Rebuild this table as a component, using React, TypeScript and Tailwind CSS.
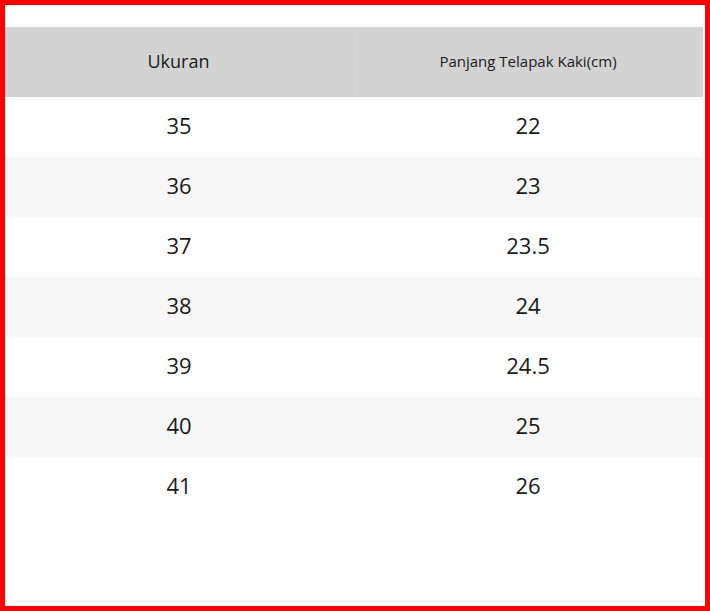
import React from "react";

const rows: [string, string][] = [
  ["35", "22"],
  ["36", "23"],
  ["37", "23.5"],
  ["38", "24"],
  ["39", "24.5"],
  ["40", "25"],
  ["41", "26"],
];

export default function App() {
  return (
    <div
      className="w-[710px] h-[611px] border-[5px] border-[#ff0000] bg-white text-[#1a1a1a]"
      style={{ fontFamily: '"Open Sans", "Noto Sans", sans-serif' }}
    >
      <div className="pt-[22px] pr-[2px]">
        <div className="grid grid-cols-[348px_350px] h-[70px] bg-[#d3d3d3]">
          <div className="flex items-center justify-center pb-[2px] text-[18px] border-r border-[#cfcfcf]">
            Ukuran
          </div>
          <div className="flex items-center justify-center pb-[2px] text-[15px]">
            Panjang Telapak Kaki(cm)
          </div>
        </div>
        {rows.map(([size, cm], i) => (
          <div
            key={size}
            className={
              "grid grid-cols-[348px_350px] h-[60px] pb-[4px] text-[22px] " +
              (i % 2 === 1 ? "bg-[#f7f7f7]" : "bg-white")
            }
          >
            <div className="flex items-center justify-center">{size}</div>
            <div className="flex items-center justify-center">{cm}</div>
          </div>
        ))}
      </div>
    </div>
  );
}
